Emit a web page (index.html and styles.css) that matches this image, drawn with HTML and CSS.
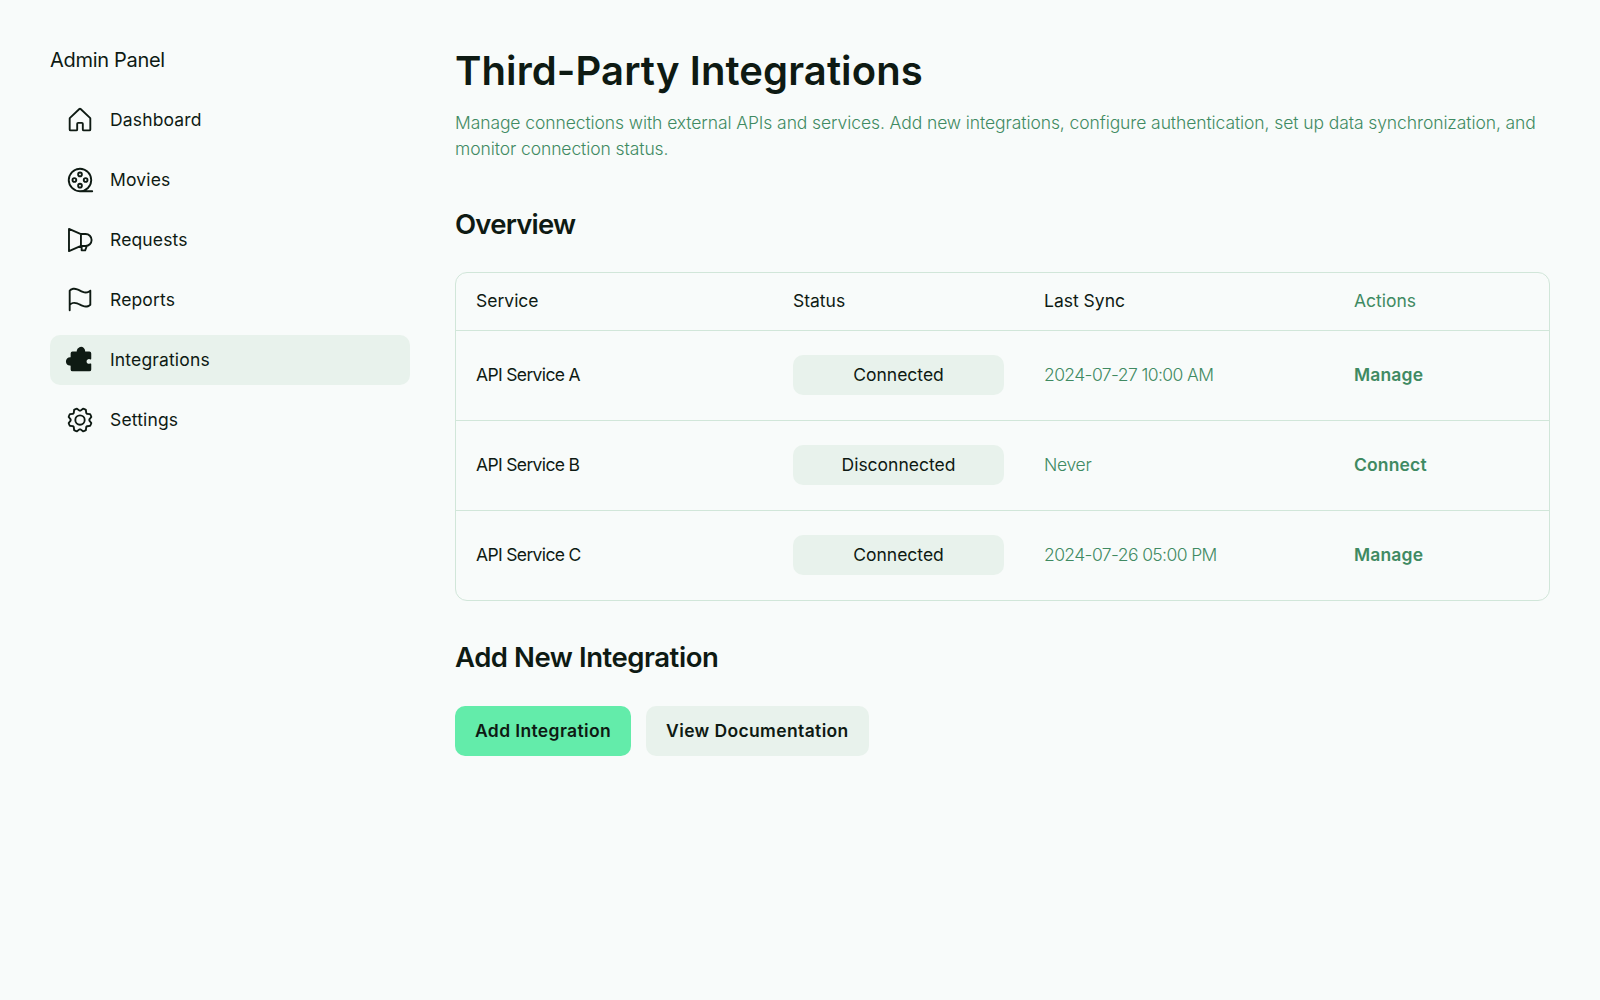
FILE: index.html
```html
<!DOCTYPE html>
<html lang="en">
<head>
  <meta charset="UTF-8">
  <title>Third-Party Integrations</title>
  <link rel="stylesheet" href="styles.css">
</head>
<body>

  <aside class="sidebar">
    <h2 class="brand">Admin Panel</h2>
    <nav class="nav">
      <a class="nav-item">
        <svg class="icon" viewBox="0 0 256 256"><path d="M218.83,103.77l-80-75.48a1.14,1.14,0,0,1-.11-.11,16,16,0,0,0-21.53,0l-.11.11L37.17,103.77A16,16,0,0,0,32,115.55V208a16,16,0,0,0,16,16H96a16,16,0,0,0,16-16V160h32v48a16,16,0,0,0,16,16h48a16,16,0,0,0,16-16V115.55A16,16,0,0,0,218.83,103.77ZM208,208H160V160a16,16,0,0,0-16-16H112a16,16,0,0,0-16,16v48H48V115.55l.11-.1L128,40l79.9,75.43.11.1Z"/></svg>
        <span>Dashboard</span>
      </a>
      <a class="nav-item">
        <svg class="icon" viewBox="0 0 256 256"><path d="M232,216H183.36A103.95,103.95,0,1,0,128,232H232a8,8,0,0,0,0-16ZM40,128a88,88,0,1,1,88,88A88.1,88.1,0,0,1,40,128Zm88-24a24,24,0,1,0-24-24A24,24,0,0,0,128,104Zm0-32a8,8,0,1,1-8,8A8,8,0,0,1,128,72Zm24,104a24,24,0,1,0-24,24A24,24,0,0,0,152,176Zm-32,0a8,8,0,1,1,8,8A8,8,0,0,1,120,176Zm56-24a24,24,0,1,0-24-24A24,24,0,0,0,176,152Zm0-32a8,8,0,1,1-8,8A8,8,0,0,1,176,120ZM80,104a24,24,0,1,0,24,24A24,24,0,0,0,80,104Zm0,32a8,8,0,1,1,8-8A8,8,0,0,1,80,136Z"/></svg>
        <span>Movies</span>
      </a>
      <a class="nav-item">
        <svg class="icon" viewBox="0 0 256 256"><path class="icon-line" d="M34 34 L136 77 H176 A51 51 0 0 1 176 179 H136 L34 222 Z M136 77 V179 M142 179 V216 H172 L186 179"/></svg>
        <span>Requests</span>
      </a>
      <a class="nav-item">
        <svg class="icon" viewBox="0 0 256 256"><path d="M34.76,42A8,8,0,0,0,32,48V216a8,8,0,0,0,16,0V171.77c26.79-21.16,49.87-9.75,76.45,3.41,16.4,8.11,34.06,16.85,53,16.85,13.93,0,28.54-4.75,43.82-18a8,8,0,0,0,2.76-6V48A8,8,0,0,0,210.76,42c-28,24.23-51.72,12.49-79.21-1.12C103.07,26.76,70.78,10.79,34.76,42ZM208,164.25c-26.79,21.16-49.87,9.74-76.45-3.41C106.63,148.5,79.64,135.14,48,152.6V51.77c26.79-21.16,49.87-9.75,76.45,3.4,24.92,12.33,51.91,25.69,83.55,8.23Z"/></svg>
        <span>Reports</span>
      </a>
      <a class="nav-item active">
        <svg class="icon" viewBox="0 0 256 256"><path d="M220.27,158.54a8,8,0,0,0-7.7-.46,20,20,0,1,1,0-36.16A8,8,0,0,0,224,114.69V72a16,16,0,0,0-16-16H171.78a35.36,35.36,0,0,0,.22-4,36.11,36.11,0,0,0-11.36-26.24,36,36,0,0,0-60.55,23.62,36.56,36.56,0,0,0,.14,6.62H64A16,16,0,0,0,48,72v32.22a35.36,35.36,0,0,0-4-.22,36.12,36.12,0,0,0-26.24,11.36,35.7,35.7,0,0,0-9.69,27,36.08,36.08,0,0,0,33.31,33.6,35.68,35.68,0,0,0,6.62-.14V208a16,16,0,0,0,16,16H208a16,16,0,0,0,16-16V165.31A8,8,0,0,0,220.27,158.54Z"/></svg>
        <span>Integrations</span>
      </a>
      <a class="nav-item">
        <svg class="icon" viewBox="0 0 256 256"><path d="M128,80a48,48,0,1,0,48,48A48.05,48.05,0,0,0,128,80Zm0,80a32,32,0,1,1,32-32A32,32,0,0,1,128,160Zm88-29.84q.06-2.16,0-4.32l14.92-18.64a8,8,0,0,0,1.48-7.06,107.21,107.21,0,0,0-10.88-26.25,8,8,0,0,0-6-3.93l-23.72-2.64q-1.48-1.56-3-3L186,40.54a8,8,0,0,0-3.94-6,107.71,107.71,0,0,0-26.25-10.87,8,8,0,0,0-7.06,1.49L130.16,40Q128,40,125.84,40L107.2,25.11a8,8,0,0,0-7.06-1.48A107.6,107.6,0,0,0,73.89,34.51a8,8,0,0,0-3.93,6L67.32,64.27q-1.56,1.49-3,3L40.54,70a8,8,0,0,0-6,3.94,107.71,107.71,0,0,0-10.87,26.25,8,8,0,0,0,1.49,7.06L40,125.84Q40,128,40,130.16L25.11,148.8a8,8,0,0,0-1.48,7.06,107.21,107.21,0,0,0,10.88,26.25,8,8,0,0,0,6,3.93l23.72,2.64q1.49,1.56,3,3L70,215.46a8,8,0,0,0,3.94,6,107.71,107.71,0,0,0,26.25,10.87,8,8,0,0,0,7.06-1.49L125.84,216q2.16.06,4.32,0l18.64,14.92a8,8,0,0,0,7.06,1.48,107.21,107.21,0,0,0,26.25-10.88,8,8,0,0,0,3.93-6l2.64-23.72q1.56-1.48,3-3L215.46,186a8,8,0,0,0,6-3.94,107.71,107.71,0,0,0,10.87-26.25,8,8,0,0,0-1.49-7.06Zm-16.1-6.5a73.93,73.93,0,0,1,0,8.68,8,8,0,0,0,1.74,5.48l14.19,17.73a91.57,91.57,0,0,1-6.23,15L187,173.11a8,8,0,0,0-5.1,2.64,74.11,74.11,0,0,1-6.14,6.14,8,8,0,0,0-2.64,5.1l-2.51,22.58a91.32,91.32,0,0,1-15,6.23l-17.74-14.19a8,8,0,0,0-5-1.75h-.48a73.93,73.93,0,0,1-8.68,0,8,8,0,0,0-5.48,1.74L100.45,215.8a91.57,91.57,0,0,1-15-6.23L82.89,187a8,8,0,0,0-2.64-5.1,74.11,74.11,0,0,1-6.14-6.14,8,8,0,0,0-5.1-2.64L46.43,170.6a91.32,91.32,0,0,1-6.23-15l14.19-17.74a8,8,0,0,0,1.74-5.48,73.93,73.93,0,0,1,0-8.68,8,8,0,0,0-1.74-5.48L40.2,100.45a91.57,91.57,0,0,1,6.23-15L69,82.89a8,8,0,0,0,5.1-2.64,74.11,74.11,0,0,1,6.14-6.14A8,8,0,0,0,82.89,69L85.4,46.43a91.32,91.32,0,0,1,15-6.23l17.74,14.19a8,8,0,0,0,5.48,1.74,73.93,73.93,0,0,1,8.68,0,8,8,0,0,0,5.48-1.74L155.55,40.2a91.57,91.57,0,0,1,15,6.23L173.11,69a8,8,0,0,0,2.64,5.1,74.11,74.11,0,0,1,6.14,6.14,8,8,0,0,0,5.1,2.64l22.58,2.51a91.32,91.32,0,0,1,6.23,15l-14.19,17.74A8,8,0,0,0,199.87,123.66Z"/></svg>
        <span>Settings</span>
      </a>
    </nav>
  </aside>

  <main class="content">
    <h1 class="page-title">Third-Party Integrations</h1>
    <p class="page-desc">Manage connections with external APIs and services. Add new integrations, configure authentication, set up data synchronization, and monitor connection status.</p>

    <h2 class="section-title overview-title">Overview</h2>
    <div class="table-wrap">
      <table class="table">
        <thead>
          <tr>
            <th class="col-service">Service</th>
            <th class="col-status">Status</th>
            <th class="col-sync">Last Sync</th>
            <th class="col-actions">Actions</th>
          </tr>
        </thead>
        <tbody>
          <tr>
            <td class="service">API Service A</td>
            <td><div class="badge">Connected</div></td>
            <td class="muted date">2024-07-27 10:00 AM</td>
            <td class="action">Manage</td>
          </tr>
          <tr>
            <td class="service">API Service B</td>
            <td><div class="badge">Disconnected</div></td>
            <td class="muted never">Never</td>
            <td class="action">Connect</td>
          </tr>
          <tr>
            <td class="service">API Service C</td>
            <td><div class="badge">Connected</div></td>
            <td class="muted date">2024-07-26 05:00 PM</td>
            <td class="action">Manage</td>
          </tr>
        </tbody>
      </table>
    </div>

    <h2 class="section-title add-title">Add New Integration</h2>
    <div class="button-group">
      <button class="btn btn-primary">Add Integration</button>
      <button class="btn">View Documentation</button>
    </div>
  </main>

</body>
</html>
```

FILE: styles.css
```css
html, body {
  margin: 0;
  height: 100%;
}

body {
  display: flex;
  font-family: Inter, 'Noto Sans', sans-serif;
  background-color: #f8fbfa;
  color: #0e1a13;
}

.sidebar {
  width: 360px;
  margin-left: 50px;
  padding-top: 44px;
  flex-shrink: 0;
}

.brand {
  margin: 0 0 18px;
  font-size: 20px;
  line-height: 33px;
  font-weight: 400;
  letter-spacing: -0.3px;
}

.nav {
  display: flex;
  flex-direction: column;
  gap: 10px;
}

.nav-item {
  display: flex;
  align-items: center;
  gap: 15px;
  height: 50px;
  padding: 0 15px;
  border-radius: 10px;
  font-size: 17.5px;
  letter-spacing: 0.15px;
}

.nav-item span {
  margin-top: -2px;
}

.nav-item.active {
  background-color: #e8f2ec;
}

.icon {
  width: 30px;
  height: 30px;
  fill: currentColor;
  flex-shrink: 0;
}

.icon-line {
  fill: none;
  stroke: currentColor;
  stroke-width: 16;
  stroke-linejoin: round;
  stroke-linecap: round;
}

.content {
  flex: 1;
  margin: 0 50px 0 45px;
  padding-top: 46px;
}

.page-title {
  margin: 0;
  font-size: 40px;
  line-height: 50px;
  font-weight: 600;
  letter-spacing: 0.1px;
}

.page-desc {
  margin: 14px 0 0;
  font-size: 17.5px;
  line-height: 26px;
  font-weight: 350;
  color: #3f8a62;
  letter-spacing: -0.09px;
}

.section-title {
  margin: 0;
  font-size: 27.5px;
  line-height: 35px;
  font-weight: 600;
}

.overview-title {
  margin-top: 45px;
  letter-spacing: -0.8px;
}

.add-title {
  margin-top: 39px;
  letter-spacing: -0.45px;
}

.table-wrap {
  margin-top: 30px;
  border: 1px solid #d1e6d9;
  border-radius: 12px;
  overflow: hidden;
}

.table {
  width: 100%;
  border-collapse: collapse;
  table-layout: fixed;
  font-size: 17.5px;
}

.table th {
  box-sizing: border-box;
  height: 57px;
  padding: 0 20px 2px;
  text-align: left;
  font-weight: 400;
}

.table td {
  height: 89px;
  padding: 0 20px;
  border-top: 1px solid #d1e6d9;
}

/* text cells sit 1px above the badge centre */
.table td.service,
.table td.muted,
.table td.action {
  box-sizing: border-box;
  padding-bottom: 2px;
}

.col-service { width: 317px; }
.col-status { width: 251px; }
.col-sync { width: 310px; }

.table .col-actions,
.muted {
  color: #3f8a62;
}

.muted {
  font-weight: 350;
}

.service {
  letter-spacing: -0.65px;
}

.date {
  letter-spacing: -0.6px;
}

.never {
  letter-spacing: -0.3px;
}

.action {
  color: #3f8a62;
  font-weight: 600;
  letter-spacing: 0.15px;
}

.badge {
  height: 40px;
  line-height: 40px;
  text-align: center;
  background-color: #e8f2ec;
  border-radius: 10px;
}

.button-group {
  display: flex;
  gap: 15px;
  margin-top: 31px;
}

.btn {
  height: 50px;
  padding: 0 20px;
  border: none;
  border-radius: 10px;
  background-color: #e8f2ec;
  color: #0e1a13;
  font-family: inherit;
  font-size: 17.5px;
  font-weight: 600;
  letter-spacing: 0.37px;
  cursor: pointer;
}

.btn-primary {
  background-color: #63ecaa;
}
```
